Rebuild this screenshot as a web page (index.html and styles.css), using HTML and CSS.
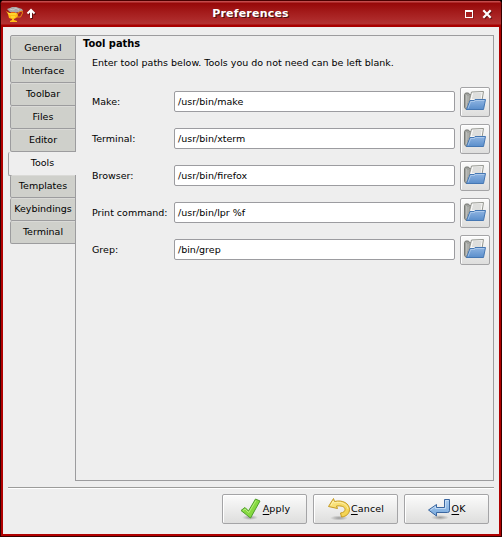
FILE: index.html
```html
<!DOCTYPE html>
<html lang="en">
<head>
<meta charset="utf-8">
<title>Preferences</title>
<link rel="stylesheet" href="styles.css">
</head>
<body>
<svg class="defs" width="0" height="0">
  <defs>
    <linearGradient id="blue" x1="0" y1="0" x2="0" y2="1"><stop offset="0" stop-color="#90b5e2"/><stop offset="1" stop-color="#5a8ecb"/></linearGradient>
    <linearGradient id="paleblue" x1="0" y1="0" x2="0" y2="1"><stop offset="0" stop-color="#a9cbef"/><stop offset="1" stop-color="#79a9dc"/></linearGradient>
    <linearGradient id="gold" x1="0" y1="0" x2="1" y2="1"><stop offset="0" stop-color="#fbe88e"/><stop offset="1" stop-color="#f2cf45"/></linearGradient>
    <radialGradient id="shade"><stop offset="0" stop-color="#000" stop-opacity=".32"/><stop offset="1" stop-color="#000" stop-opacity="0"/></radialGradient>
    <symbol id="folder" viewBox="0 0 24 24">
      <path d="M1.500 4.500l1-1.500h3l1 1.500h10v15H3l-1.500-2z" fill="#a0a29e" stroke="#777975"/>
      <path d="M3.500 5v12M5 6v7" stroke="#c3c4c1" stroke-width=".8"/>
      <path d="M6 12L8.500 2l12-.5-1.500 9z" fill="#f7f7f6" stroke="#94968f"/>
      <path d="M10 4h8.500M9.500 6h8.500M9 8h9" stroke="#b8b9b6" stroke-width=".8"/>
      <path d="M3.500 19.500L7 10.500h4l1-1h10.500L20.500 19.500z" fill="url(#blue)" stroke="#4577b3" stroke-linejoin="round"/>
      <path d="M5 18.500l2.700-7h3.800l1-1h8.800" fill="none" stroke="#b9d2ef" stroke-width=".7"/>
    </symbol>
  </defs>
</svg>
<div class="window">
  <header class="titlebar">
    <svg class="lamp" width="18" height="18" viewBox="0 0 18 18">
      <path d="M1 4l3-1 2-1 4 0 3 1 3 1 1 2-4 1-5 1-4-1z" fill="#aaa7a7"/>
      <path d="M4 4l3 1 3-2 3 2" fill="none" stroke="#cbc8c8"/>
      <path d="M11 10l2-3 3-1 .5 2-2 4h-4" fill="none" stroke="#e98b14"/>
      <path d="M0 6l3 2h8l1 3-2 2-2 1v1l3 1v1H4v-1l2-1v-1l-3-1-1-4z" fill="#ffbd16"/>
      <path d="M2 8l2 1h6M5 12h4" fill="none" stroke="#ffee40"/>
      <path d="M5 7h4v1H5z" fill="#e86a0a"/>
    </svg>
    <svg class="shade" width="10" height="11" viewBox="0 0 10 11"><path d="M5 2v8M1.500 5.500L5 2 8.500 5.500" fill="none" stroke="#fff" stroke-width="2"/></svg>
    <h1>Preferences</h1>
    <svg class="maximize" width="9" height="9" viewBox="0 0 9 9" shape-rendering="crispEdges"><path d="M0 0h8v8H0zM1 2v5h6V2z" fill="#fff" fill-rule="evenodd"/><path d="M8 1v8H1" stroke="#611" fill="none" opacity=".5"/></svg>
    <svg class="close" width="10" height="10" viewBox="0 0 10 10"><path d="M1.300 1.300l7.400 7.400M8.700 1.300l-7.400 7.400" stroke="#fff" stroke-width="2.200"/></svg>
  </header>
  <main class="content">
    <div class="notebook">
      <nav class="tabs">
        <span class="tab">General</span><span class="tab">Interface</span><span class="tab">Toolbar</span><span class="tab">Files</span><span class="tab">Editor</span><span class="tab active">Tools</span><span class="tab">Templates</span><span class="tab">Keybindings</span><span class="tab">Terminal</span>
      </nav>
      <section class="page">
        <h2>Tool paths</h2>
        <p>Enter tool paths below. Tools you do not need can be left blank.</p>
        <div class="rows">
          <div class="row"><label>Make:</label><div class="entry">/usr/bin/make</div><button class="browse"><svg width="24" height="24"><use href="#folder"/></svg></button></div>
          <div class="row"><label>Terminal:</label><div class="entry">/usr/bin/xterm</div><button class="browse"><svg width="24" height="24"><use href="#folder"/></svg></button></div>
          <div class="row"><label>Browser:</label><div class="entry">/usr/bin/firefox</div><button class="browse"><svg width="24" height="24"><use href="#folder"/></svg></button></div>
          <div class="row"><label>Print command:</label><div class="entry">/usr/bin/lpr %f</div><button class="browse"><svg width="24" height="24"><use href="#folder"/></svg></button></div>
          <div class="row"><label>Grep:</label><div class="entry">/bin/grep</div><button class="browse"><svg width="24" height="24"><use href="#folder"/></svg></button></div>
        </div>
      </section>
    </div>
    <footer class="actions">
      <button class="action"><svg width="24" height="24" viewBox="0 0 24 24"><ellipse cx="11" cy="20.500" rx="8" ry="2.500" fill="url(#shade)"/><path d="M2 13.500l4-3 3.500 3.500 7-12 4.500 2-9.500 17z" fill="#86d93f" stroke="#4f9e2c" stroke-linejoin="round"/><path d="M4 13.500l2-1.500 3.700 3.700L17 3.500" fill="none" stroke="#b5f07d"/></svg><span><u>A</u>pply</span></button>
      <button class="action"><svg width="24" height="24" viewBox="0 0 24 24"><ellipse cx="12" cy="21" rx="9" ry="2.500" fill="url(#shade)"/><path d="M1.500 9.500L6.500 1.500l1 3c8-2 15 2 15 8 0 4-3 7-8 7.500l-1-4c3-.5 4.500-1.500 4.500-3.500 0-3-4-4-8.500-3.500l1 2.500z" fill="url(#gold)" stroke="#c69a20" stroke-linejoin="round"/><path d="M4 8.300L6.300 4l1 2c6-2 13 1 13.700 6" fill="none" stroke="#fff4b5" stroke-width=".8"/></svg><span><u>C</u>ancel</span></button>
      <button class="action"><svg width="24" height="24" viewBox="0 0 24 24"><ellipse cx="13" cy="20.500" rx="9" ry="2.500" fill="url(#shade)"/><path d="M1.500 13l8-5.500v3h8v-8h5v11q0 2-2 2h-11v3.500z" fill="url(#paleblue)" stroke="#39659f" stroke-linejoin="round"/><path d="M3.500 13l5-3.500v2h10v-8h3" fill="none" stroke="#cbe1f7" stroke-width=".8"/></svg><span><u>O</u>K</span></button>
    </footer>
  </main>
</div>
</body>
</html>
```
FILE: styles.css
```css
* { box-sizing: border-box; }
body { margin: 0; background: #000; font: 9.5px/14px "DejaVu Sans", sans-serif; color: #000; overflow: hidden; }
.defs { position: absolute; }
.window { width: 502px; height: 537px; padding: 0 3px 3px; background: #b00000; border-radius: 5px 5px 0 0; box-shadow: inset 1px 0 #360000, inset -1px 0 #360000, inset 0 -1px #360000; }
.titlebar { height: 27px; margin: 0 -2px; padding: 0 9px 0 5px; display: flex; align-items: center; background: linear-gradient(#4a0000 0 1px, #c44a4a 1px 2px, #960808 3px, #a51d1d 13px, #b33232 24px, #a80000 25px); border-radius: 4px 4px 0 0; }
.lamp { margin-top: 0; }
.shade { margin-left: 2px; filter: drop-shadow(1px 1px #5b1010); }
h1 { margin: 1px 0 0; flex: 1; text-align: center; font-size: 11px; line-height: 14px; letter-spacing: .2px; color: #fff; text-shadow: 1px 1px #4a1010; }
.maximize { margin: 1px 8px 0 0; }
.close { margin-top: 1px; filter: drop-shadow(1px 1px #641515); }
.content { height: 507px; padding: 8px 5px 0; background: #eeeeee; }
.notebook { display: flex; height: 446px; }
.tabs { width: 68px; padding-left: 2px; display: flex; flex-direction: column; position: relative; z-index: 1; }
.tab { height: 23px; flex: none; display: flex; align-items: center; justify-content: center; background: #cfd0cb; border: solid #9c9c9e; border-width: 0 1px 1px; border-radius: 2px 0 0 2px; box-shadow: inset 0 1px #dadad7; }
.tab:first-child { height: 25px; border-top-width: 1px; padding-top: 1px; }
.tab.active { margin-left: -2px; height: 24px; margin-bottom: -1px; background: #eeeeee; border-right: 0; box-shadow: none; padding-bottom: 1px; }
.page { flex: none; width: 419px; margin-left: -1px; padding: 1px 3px 0 6px; border: 1px solid #9c9c9e; }
h2 { margin: 0 0 0 1px; font-size: 9.900px; line-height: 14px; }
p { margin: 5px 0 0 10px; white-space: nowrap; }
.rows { margin: 17px 0 0 10px; display: flex; flex-direction: column; gap: 7px; }
.row { display: flex; height: 30px; }
label { width: 82px; padding-top: 8px; white-space: nowrap; }
.entry { width: 281px; height: 21px; margin-top: 4px; padding: 3px 3px; line-height: 14px; background: #fff; border: 1px solid #9c9ca0; border-radius: 2px; }
button { padding: 0; font: inherit; color: inherit; background: linear-gradient(#fbfbfb, #dededd); border: 1px solid #a4a4a6; border-radius: 2px; box-shadow: inset 1px 1px #fff; }
.browse { width: 30px; height: 30px; margin-left: 5px; display: flex; align-items: center; justify-content: center; }
.actions { margin-top: 6px; border-top: 1px solid #9c9c9a; box-shadow: inset 0 1px #fff; padding: 6px 5px 0 0; display: flex; justify-content: flex-end; gap: 6px; }
.action { width: 85px; height: 30px; display: flex; align-items: center; justify-content: center; }
.action span { letter-spacing: .15px; }
u { text-underline-offset: 2px; text-decoration-skip-ink: none; }
```
